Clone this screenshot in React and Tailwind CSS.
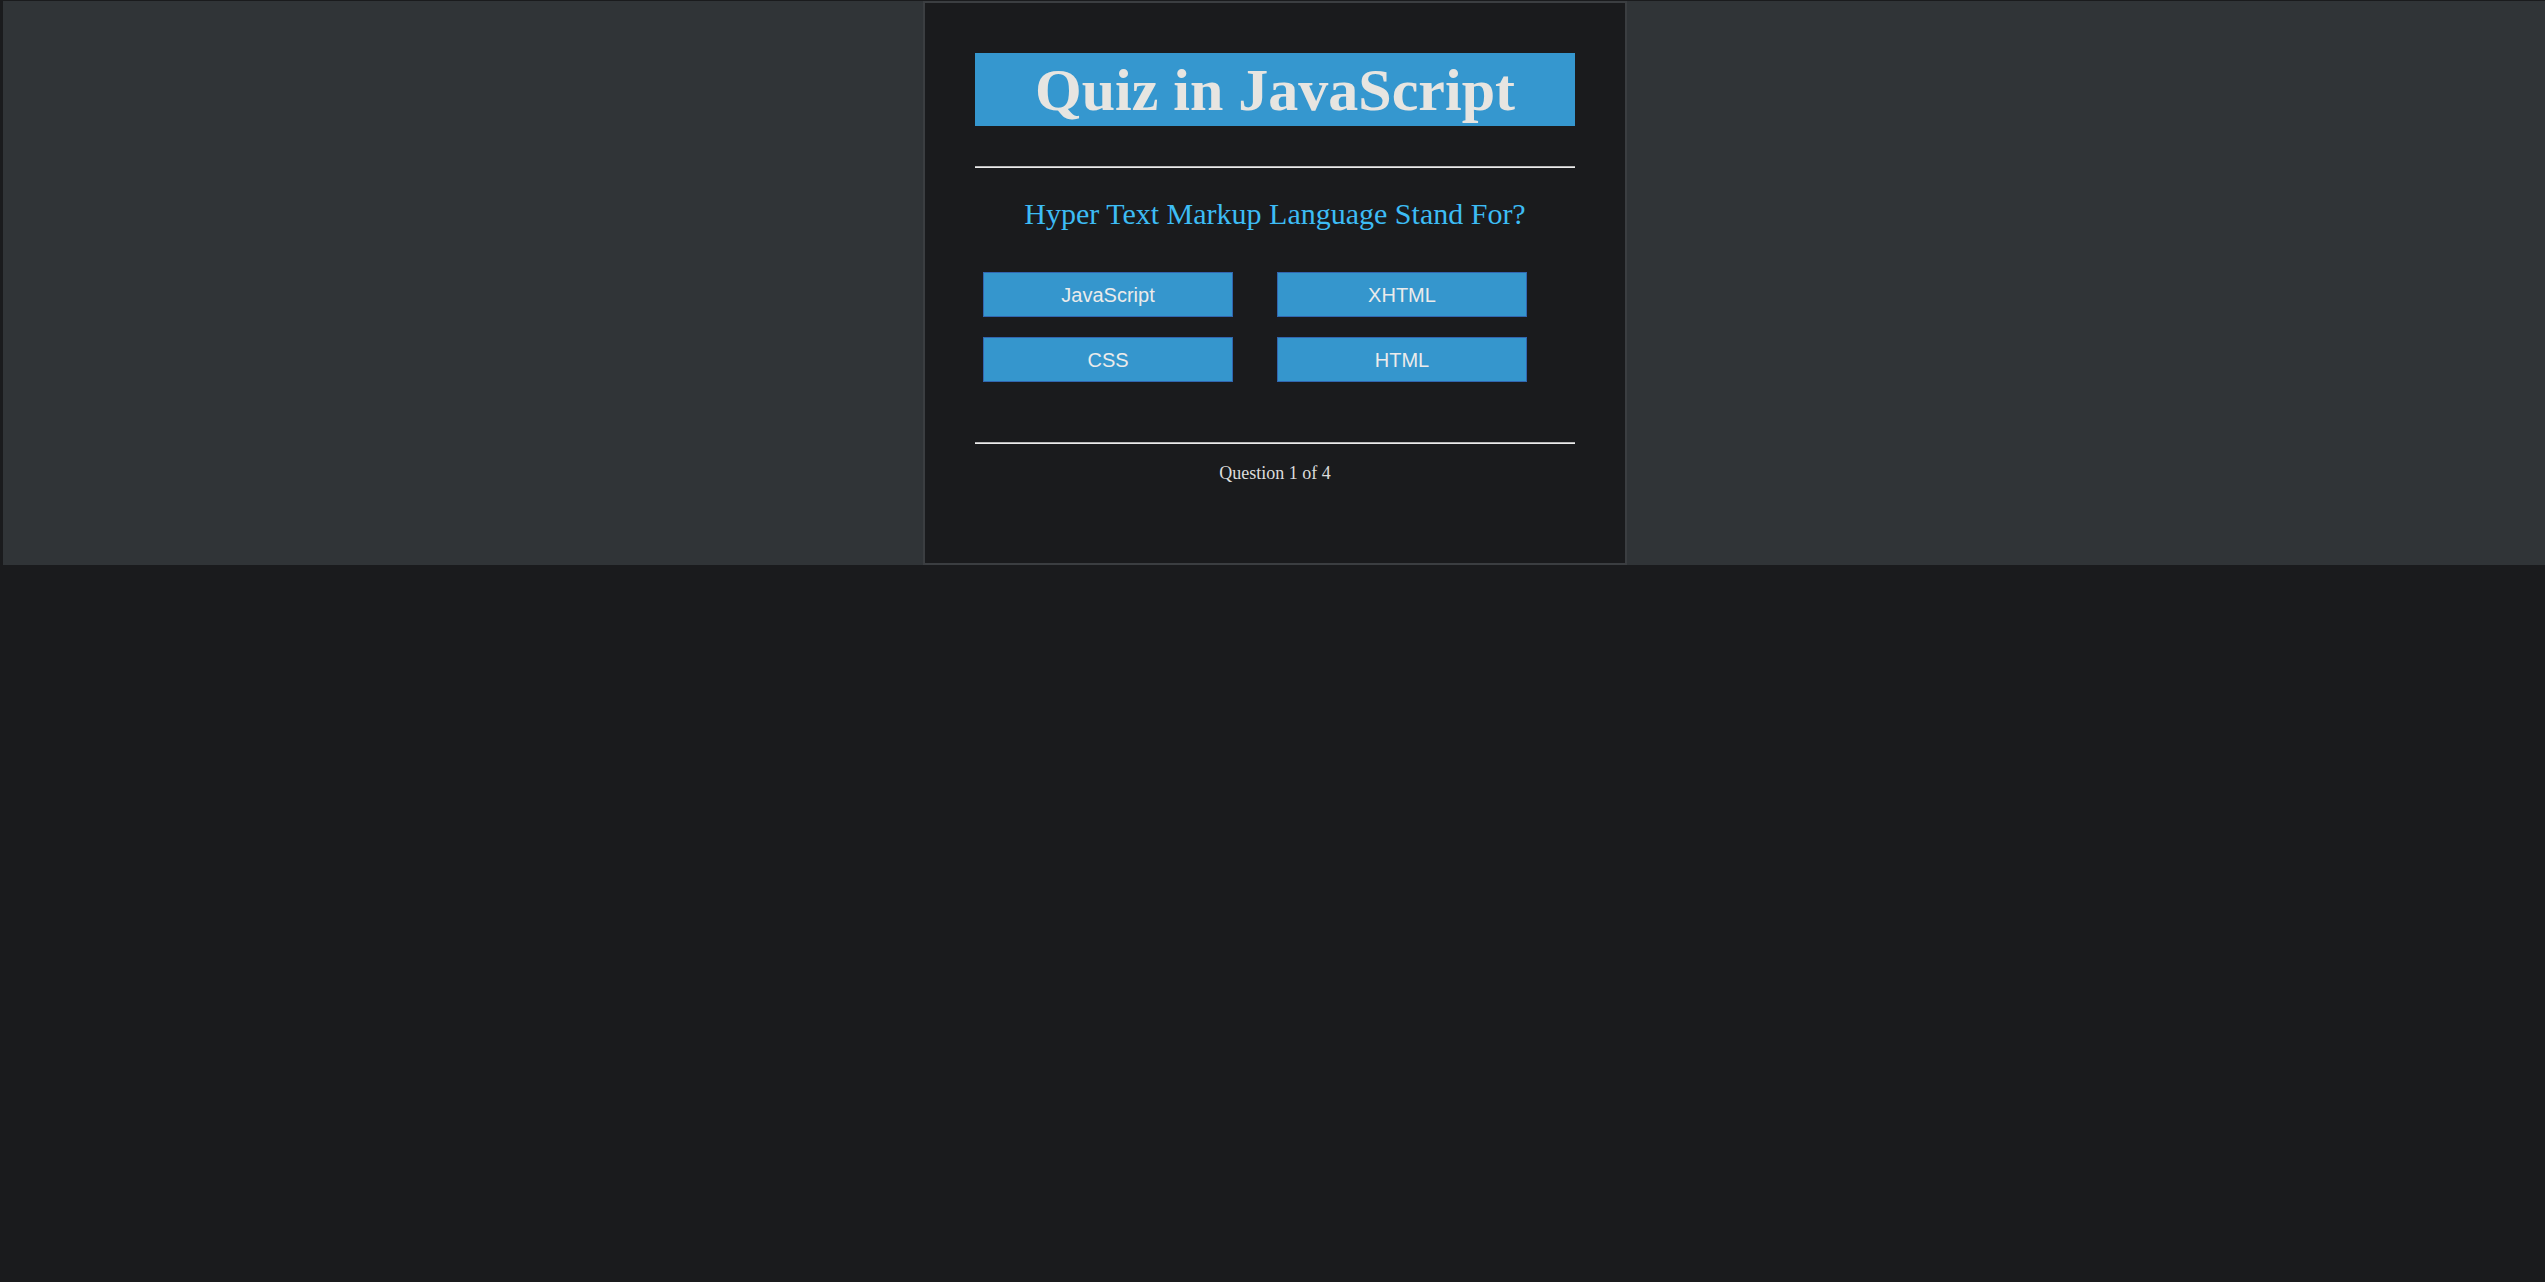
const answers = ["JavaScript", "XHTML", "CSS", "HTML"];

export default function App() {
  return (
    <div className="min-h-screen bg-[#1a1b1d] pt-px pl-[3px]">
      <div className="h-[564px] bg-[#303437] pl-[2px]">
        <div className="mx-auto flex h-[564px] w-[704px] flex-col border-2 border-[#3b3e41] bg-[#1a1b1d] px-[50px] pt-[50px] font-['Liberation_Serif',serif]">
          <h1 className="flex h-[73px] items-center justify-center bg-[#3597cf] text-[60px] font-bold leading-none text-[#e7e5e1]">
            Quiz in JavaScript
          </h1>

          <hr className="mt-[40px] border-t border-b border-t-[#b8b8b8] border-b-[#ececec]" />

          <p className="mt-[29px] text-center text-[30px] leading-[34px] text-[#3dbcf4]">
            Hyper Text Markup Language Stand For?
          </p>

          <div className="mt-[41px] grid grid-cols-[250px_250px] gap-x-[44px] gap-y-[20px] pl-[8px]">
            {answers.map((a) => (
              <button
                key={a}
                className="h-[45px] border border-[#3266b0] bg-[#3596cd] font-['Liberation_Sans',sans-serif] text-[20px] text-[#ebebeb]"
              >
                {a}
              </button>
            ))}
          </div>

          <hr className="mt-[60px] border-t border-b border-t-[#b8b8b8] border-b-[#ececec]" />

          <p className="mt-[18px] text-center text-[18px] leading-[22px] text-[#dcdcdc]">
            Question 1 of 4
          </p>
        </div>
      </div>
    </div>
  );
}
